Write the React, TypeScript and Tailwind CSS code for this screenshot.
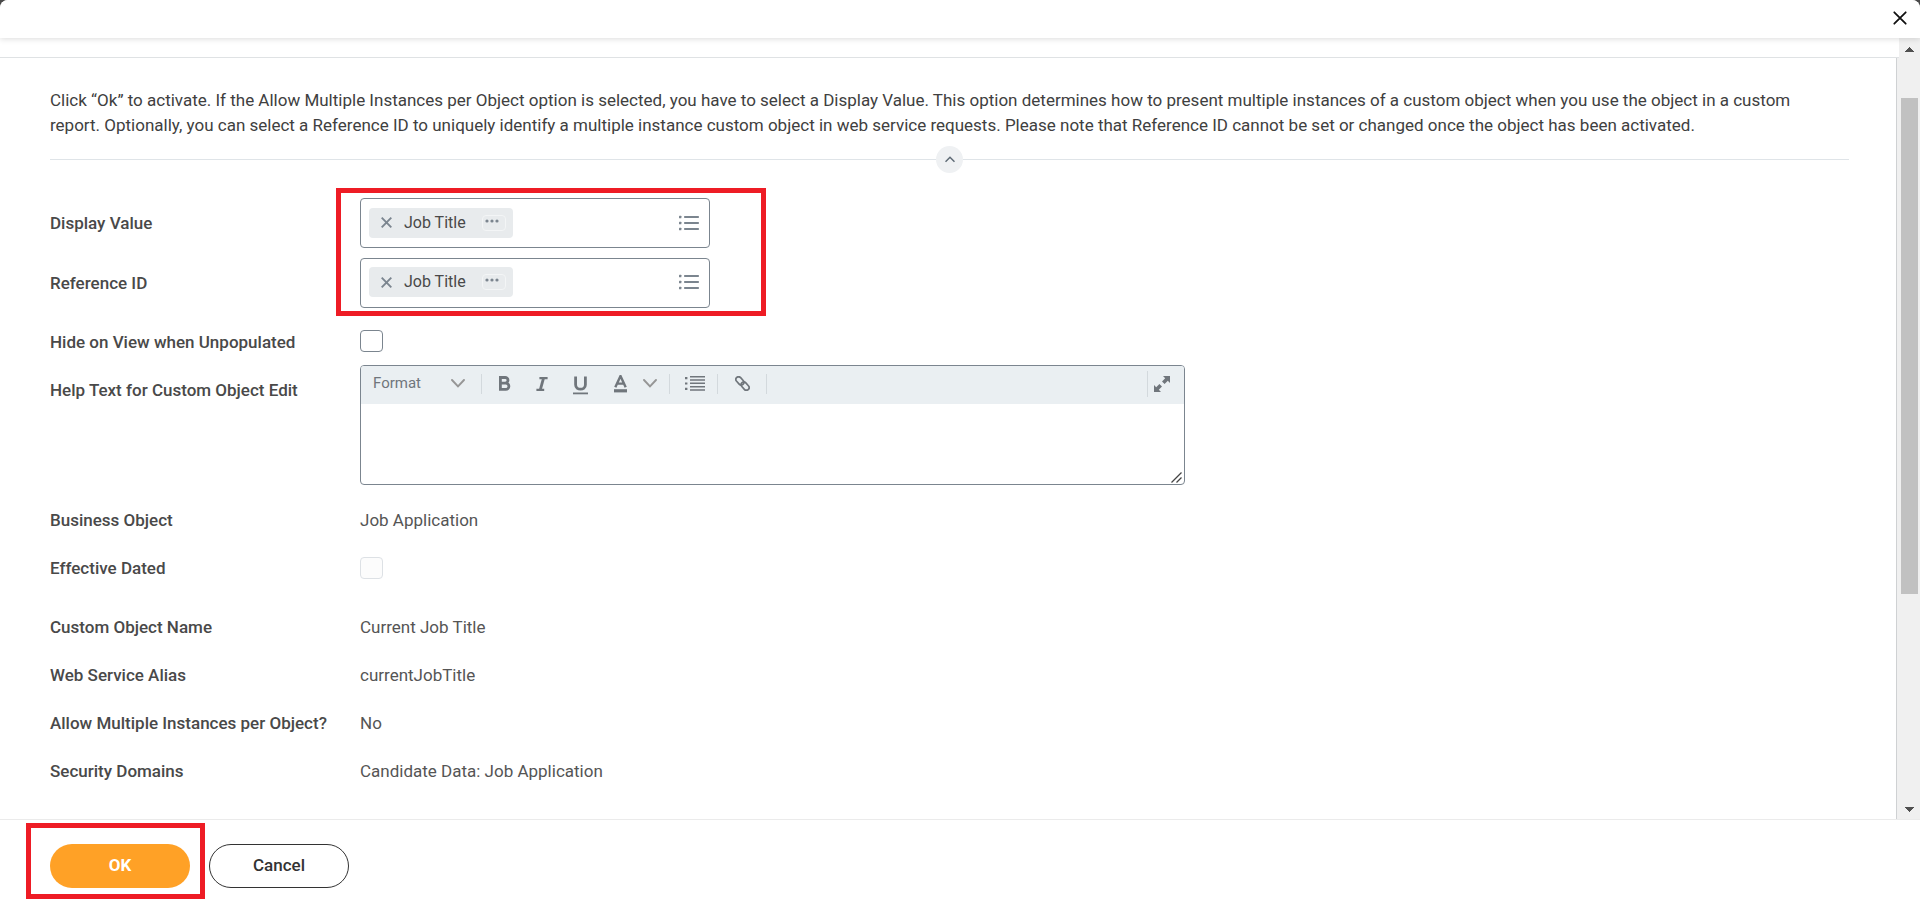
import { useState, type ReactNode } from "react";

const INTRO =
  "Click “Ok” to activate. If the Allow Multiple Instances per Object option is selected, you have to select a Display Value. This option determines how to present multiple instances of a custom object when you use the object in a custom report. Optionally, you can select a Reference ID to uniquely identify a multiple instance custom object in web service requests. Please note that Reference ID cannot be set or changed once the object has been activated.";

const details = [
  { label: "Custom Object Name", value: "Current Job Title" },
  { label: "Web Service Alias", value: "currentJobTitle" },
  { label: "Allow Multiple Instances per Object?", value: "No" },
  { label: "Security Domains", value: "Candidate Data: Job Application" },
];

function Chevron() {
  return (
    <svg width="14" height="9" viewBox="0 0 14 9" fill="none" stroke="currentColor" strokeWidth="1.9" strokeLinecap="round">
      <path d="M1 1l6 6.4L13 1" />
    </svg>
  );
}

function ListIcon() {
  return (
    <svg width="20" height="16" viewBox="0 0 20 16" fill="currentColor">
      {[0, 6, 12].map((y) => (
        <g key={y}>
          <rect x="0" y={y + 0.7} width="2.4" height="2.6" rx="0.6" />
          <rect x="5" y={y + 1} width="15" height="2" rx="0.8" />
        </g>
      ))}
    </svg>
  );
}

function PromptField({ id }: { id: string }) {
  const [selected, setSelected] = useState(true);
  return (
    <div className="flex h-[50px] w-[350px] items-center rounded border border-[#7b858f] bg-white pr-[10px] pb-px pl-2">
      {selected && (
        <div className="flex h-[30px] shrink-0 items-center rounded-sm bg-[#e8ebed] pr-[7px] pl-3">
          <button type="button" aria-label="Remove" onClick={() => setSelected(false)} className="text-[#7b858f]">
            <svg width="11" height="11" viewBox="0 0 11 11" fill="none" stroke="currentColor" strokeWidth="1.9">
              <path d="M0.7 0.7l9.6 9.6M10.3 0.7L0.7 10.3" />
            </svg>
          </button>
          <span className="ml-3 w-[78px] text-base text-[#494949]">Job Title</span>
          <button
            type="button"
            aria-label="Related actions"
            className="flex h-4 w-6 items-center justify-center rounded-sm border border-[#f3f5f6] pr-1 pb-1 text-[#7b858f]"
          >
            <svg width="14" height="4" viewBox="0 0 14 4" fill="currentColor">
              <circle cx="2" cy="2" r="1.6" />
              <circle cx="7" cy="2" r="1.6" />
              <circle cx="12" cy="2" r="1.6" />
            </svg>
          </button>
        </div>
      )}
      <input id={id} type="text" className="min-w-0 flex-1 bg-transparent px-2 text-base outline-none" />
      <button type="button" aria-label="Open list" className="text-[#7b858f]">
        <ListIcon />
      </button>
    </div>
  );
}

function Label({ htmlFor, children }: { htmlFor?: string; children: ReactNode }) {
  const cls = "w-[310px] shrink-0 text-[17px] leading-6 font-medium text-[#494949]";
  return htmlFor ? (
    <label htmlFor={htmlFor} className={cls}>
      {children}
    </label>
  ) : (
    <div className={cls}>{children}</div>
  );
}

function ValueRow({ label, value }: { label: string; value: string }) {
  return (
    <div className="flex h-12 items-center">
      <Label>{label}</Label>
      <div className="text-[17px] leading-6 text-[#555]">{value}</div>
    </div>
  );
}

function Separator() {
  return <span className="h-5 w-px bg-[#d3d9dd]" />;
}

function Toolbar() {
  return (
    <div className="flex h-[38px] items-center rounded-t-[3px] bg-[#eaeff2] pb-[3px] text-[#70767c]">
      <button type="button" className="flex h-full w-[120px] shrink-0 items-center justify-between pr-4 pl-3 text-[15px]">
        <span>Format</span>
        <span className="text-[#969696]">
          <Chevron />
        </span>
      </button>
      <Separator />
      <button type="button" aria-label="Bold" className="ml-4">
        <svg width="14" height="15" viewBox="0 0 14 15" fill="none" stroke="currentColor" strokeWidth="2.8">
          <path d="M2.4 1.5h4.8a2.7 2.7 0 0 1 0 5.6H2.4M2.4 7.1h5.4a3.1 3.1 0 0 1 0 6.2H2.4M2.400 0.1v14.600" />
        </svg>
      </button>
      <button type="button" aria-label="Italic" className="ml-6">
        <svg width="12" height="14" viewBox="0 0 12 14" fill="none" stroke="currentColor">
          <path d="M3.4 1.2H11.6M0.4 12.8H8.2" strokeWidth="2.2" />
          <path d="M7.5 1.2L4.3 12.8" strokeWidth="2.8" />
        </svg>
      </button>
      <button type="button" aria-label="Underline" className="ml-[25px] pt-1">
        <svg width="15" height="19" viewBox="0 0 15 19" fill="none" stroke="currentColor" strokeWidth="2.8">
          <path d="M2.6 0.5v8.200c0 6 9.800 6 9.800 0V0.500" />
          <path d="M0 17.400h15" strokeWidth="1.800" />
        </svg>
      </button>
      <button type="button" aria-label="Text color" className="ml-[26px] flex items-center gap-4">
        <svg width="13" height="18" viewBox="0 0 13 18" fill="none" stroke="currentColor" strokeWidth="2.400">
          <path d="M1.300 12.200L6.500 1l5.200 11.200M3.300 8.600h6.400" />
          <path d="M0 15.800h13" strokeWidth="3.200" />
        </svg>
        <span className="text-[#969696]">
          <Chevron />
        </span>
      </button>
      <div className="mr-[15px] ml-3 h-5 w-px bg-[#d3d9dd]" />
      <button type="button" aria-label="Bulleted list">
        <svg width="20" height="15" viewBox="0 0 20 15" fill="currentColor">
          <path d="M0 1h2.4v2.2H0zM0 6.4h2.4v2.2H0zM0 11.8h2.4V14H0z" />
          <path d="M5 0h15v1.5H5zM5 3.2h15v1.5H5zM5 6.6h15v1.5H5zM5 10h15v1.5H5zM5 13.2h15v1.5H5z" />
        </svg>
      </button>
      <div className="mr-[17px] ml-3 h-5 w-px bg-[#d3d9dd]" />
      <button type="button" aria-label="Link" className="mr-4">
        <svg width="15" height="15" viewBox="0 0 15 15" fill="none" stroke="currentColor" strokeWidth="1.7">
          <rect x="-4.6" y="-2.7" width="9.2" height="5.4" rx="2.7" transform="translate(4.9 4.9) rotate(48)" />
          <rect x="-4.6" y="-2.7" width="9.2" height="5.4" rx="2.7" transform="translate(10.1 10.1) rotate(48)" />
        </svg>
      </button>
      <Separator />
      <div className="ml-auto h-[26px] w-px bg-[#d3d9dd]" />
      <button type="button" aria-label="Maximize" className="mr-[14px] ml-[6px]">
        <svg width="16" height="16" viewBox="0 0 16 16" fill="currentColor">
          <path d="M9 0h7v7l-2.200-2.200-3.200 3.200L8 5.400l3.200-3.200z" />
          <path d="M7 16H0V9l2.200 2.200L5.400 8 8 10.600l-3.200 3.200z" />
        </svg>
      </button>
    </div>
  );
}

export default function App() {
  const [hide, setHide] = useState(false);
  const [open, setOpen] = useState(true);

  return (
    <div className="h-screen bg-[#4a4a4a] font-[Roboto,sans-serif]">
      <div className="flex h-full flex-col overflow-hidden rounded-t-lg bg-white">
        <header className="relative z-10 flex h-[38px] shrink-0 items-center justify-end bg-white pr-[13px] pb-[2px] shadow-[0_1px_6px_rgba(0,0,0,0.14)]">
          <button type="button" aria-label="Close" className="text-[#111]">
            <svg width="14" height="14" viewBox="0 0 14 14" fill="none" stroke="currentColor" strokeWidth="1.8" strokeLinecap="round">
              <path d="M1.3 1.3l11.4 11.4M12.7 1.3L1.3 12.7" />
            </svg>
          </button>
        </header>

        <div className="flex min-h-0 flex-1">
          <main className="flex min-w-0 flex-1 flex-col overflow-hidden bg-[#f0f0f0]">
            <div className="h-5 shrink-0 border-b border-[#dfe2e4] bg-white" />
            <div className="mr-[2px] flex-1 border-r border-[#cfd1d3] bg-white pt-[30px] pr-[47px] pl-[50px]">
              {open && <p className="pr-10 text-[17px] leading-[25px] text-[#404040]">{INTRO}</p>}
              <div className="mt-2 flex items-center">
                <div className="h-px flex-1 bg-[#dfe4e8]" />
                <button
                  type="button"
                  aria-label="Toggle instructions"
                  onClick={() => setOpen(!open)}
                  className="flex h-[27px] w-[27px] items-center justify-center rounded-full bg-[#eff1f3] text-[#5e6a75]"
                >
                  <svg width="10" height="7" viewBox="0 0 10 7" fill="none" stroke="currentColor" strokeWidth="1.5">
                    <path d="M0.5 5.8L5 1.3l4.5 4.5" />
                  </svg>
                </button>
                <div className="h-px flex-1 bg-[#dfe4e8]" />
              </div>

              <form className="pt-5">
                <div className="relative">
                  <div className="flex h-[60px] items-center">
                    <Label htmlFor="display-value">Display Value</Label>
                    <PromptField id="display-value" />
                  </div>
                  <div className="flex h-[59px] items-center">
                    <Label htmlFor="reference-id">Reference ID</Label>
                    <PromptField id="reference-id" />
                  </div>
                  <div className="pointer-events-none absolute -top-[5px] -bottom-1 left-[286px] w-[430px] border-[5px] border-[#ee1c25]" />
                </div>
                <div className="flex pt-[18px] pb-[11px]">
                  <Label htmlFor="hide">Hide on View when Unpopulated</Label>
                  <input
                    id="hide"
                    type="checkbox"
                    checked={hide}
                    onChange={(e) => setHide(e.target.checked)}
                    className="h-[22px] w-[23px] appearance-none rounded-sm border border-[#7b858f] bg-white checked:bg-[#7b858f]"
                  />
                </div>
                <div className="flex pb-[11px]">
                  <div className="flex shrink-0 pt-[13px]">
                    <Label htmlFor="help-text">Help Text for Custom Object Edit</Label>
                  </div>
                  <div className="relative h-[120px] w-[825px] rounded border border-[#7b858f]">
                    <Toolbar />
                    <textarea id="help-text" className="block h-20 w-full resize-none px-3 py-2 text-base outline-none" />
                    <svg className="absolute right-[2px] bottom-[1px] text-[#444]" width="11" height="11" viewBox="0 0 11 11" fill="none" stroke="currentColor" strokeWidth="1.3">
                      <path d="M0.5 10.5l10-10M5.5 10.5l5-5" />
                    </svg>
                  </div>
                </div>
                <ValueRow label="Business Object" value="Job Application" />
                <div className="mb-[11px] flex h-12 items-center">
                  <Label htmlFor="effective">Effective Dated</Label>
                  <input
                    id="effective"
                    type="checkbox"
                    disabled
                    className="h-[22px] w-[23px] appearance-none rounded-sm border border-[#dde1e5] bg-[#fcfcfc]"
                  />
                </div>
                {details.map((d) => (
                  <ValueRow key={d.label} label={d.label} value={d.value} />
                ))}
              </form>
            </div>
          </main>

          {/* scroll track */}
          <div aria-hidden="true" className="flex w-[21px] shrink-0 flex-col items-center bg-[#f0f0f0] pt-[9px] pb-[7px] text-[#505050]">
            <svg width="9" height="5" viewBox="0 0 9 5" fill="currentColor" shapeRendering="crispEdges">
              <path d="M0 5L4.5 0 9 5z" />
            </svg>
            <div className="flex w-full flex-1 flex-col px-[2px] pt-[46px]">
              <div className="h-[70%] bg-[#c1c1c1]" />
            </div>
            <svg width="9" height="5" viewBox="0 0 9 5" fill="currentColor" shapeRendering="crispEdges">
              <path d="M0 0h9L4.5 5z" />
            </svg>
          </div>
        </div>

        <footer className="flex h-[90px] shrink-0 items-start gap-[19px] border-t border-[#ebebeb] bg-white pt-6 pl-[50px]">
          <div className="relative">
            <button type="button" className="h-11 w-[140px] rounded-full bg-[#ffa126] text-[17px] font-bold text-white">
              OK
            </button>
            <div className="pointer-events-none absolute -top-[21px] -right-[15px] -bottom-[11px] -left-6 border-[5px] border-[#ee1c25]" />
          </div>
          <button type="button" className="h-11 w-[140px] rounded-full border border-[#333] bg-white text-[17px] font-medium text-[#333]">
            Cancel
          </button>
        </footer>
      </div>
    </div>
  );
}
